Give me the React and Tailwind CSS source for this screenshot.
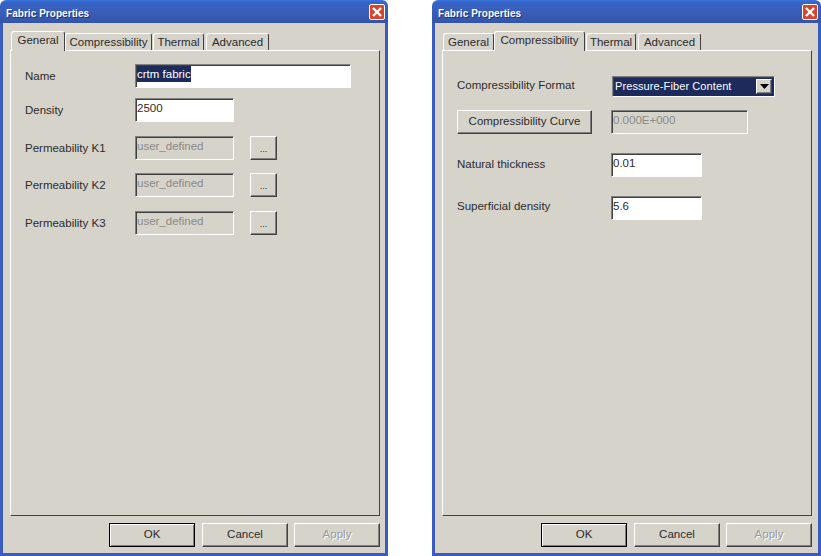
const face = "bg-[#d6d3cb]";
const raised =
  "border border-t-white border-l-white border-r-[#404040] border-b-[#404040] shadow-[inset_-1px_-1px_0_#808080]";
const sunken =
  "border border-t-[#808080] border-l-[#808080] border-r-white border-b-white shadow-[inset_1px_1px_0_#404040]";

function Tabs({ items }) {
  return (
    <div className="flex items-end h-[19px] pl-px">
      {items.map((t) => (
        <div
          key={t.label}
          className={`${t.width} ${t.gap} ${face} relative flex justify-center pt-px leading-[15px] border-l border-t border-r border-l-white border-t-white border-r-[#404040] rounded-t-[3px] ${
            t.active ? "h-[20px] z-10 -mb-px" : "h-[17px]"
          }`}
        >
          {t.label}
        </div>
      ))}
    </div>
  );
}

function Field({ value, width, disabled, selected }) {
  return (
    <div
      className={`${width} h-6 ${sunken} pl-px pt-[1px] leading-[16px] ${
        disabled ? "text-[#8a8a86]" : "bg-white"
      }`}
    >
      {selected ? (
        <span className="bg-[#1c2a5c] text-white inline-block h-[16px]">{value}</span>
      ) : (
        value
      )}
    </div>
  );
}

function Button({ children, width, disabled, isDefault }) {
  return (
    <div
      className={`${width} h-6 flex items-center justify-center ${
        isDefault
          ? "border border-black shadow-[inset_1px_1px_0_white,inset_-1px_-1px_0_#808080]"
          : raised
      } ${disabled ? "text-[#9a9a96] [text-shadow:1px_1px_0_white]" : ""}`}
    >
      {children}
    </div>
  );
}

function Window({ tabs, width, bodyPad, children }) {
  return (
    <div className={`${width} h-[556px] flex flex-col`}>
      <div className="h-[23px] shrink-0 rounded-t-[6px] bg-[linear-gradient(to_bottom,#3a74dc_0px,#3562c6_3px,#3a5eb8_12px,#3454a8_100%)] flex items-center justify-between pl-[6px] pr-[3px]">
        <span className="text-white font-bold text-[10px] tracking-[0.05px] pt-[3px] [text-shadow:1px_1px_0_#1c2f7a]">
          Fabric Properties
        </span>
        <div className="w-4 h-4 rounded-[2px] border border-white bg-[#d8452c] flex items-center justify-center">
          <svg width="12" height="12" viewBox="0 0 12 12">
            <path d="M2 2 L10 10 M10 2 L2 10" stroke="white" strokeWidth="2.4" />
          </svg>
        </div>
      </div>
      <div className={`flex-1 flex flex-col ${face} border-x-[3px] border-b-[3px] border-[#3a5cc0] pl-[7px] ${bodyPad} pt-2 pb-[6px]`}>
        <Tabs items={tabs} />
        <div className={`flex-1 ${face} border border-t-white border-l-white border-r-[#404040] border-b-[#404040] pl-[14px]`}>
          {children}
        </div>
        <div className="flex justify-end mt-[7px]">
          <Button width="w-[86px]" isDefault>OK</Button>
          <div className="ml-[7px]">
            <Button width="w-[86px]">Cancel</Button>
          </div>
          <div className="ml-[6px]">
            <Button width="w-[86px]" disabled>Apply</Button>
          </div>
        </div>
      </div>
    </div>
  );
}

const generalTabs = [
  { label: "General", width: "w-[54px]", gap: "", active: true },
  { label: "Compressibility", width: "w-[87px]", gap: "" },
  { label: "Thermal", width: "w-[51px]", gap: "ml-px" },
  { label: "Advanced", width: "w-[63px]", gap: "ml-[2px]" },
];

const compressTabs = [
  { label: "General", width: "w-[51px]", gap: "" },
  { label: "Compressibility", width: "w-[91px]", gap: "", active: true },
  { label: "Thermal", width: "w-[50px]", gap: "ml-px" },
  { label: "Advanced", width: "w-[63px]", gap: "ml-[2px]" },
];

function PermRow({ label, mt }) {
  return (
    <div className={`flex items-center ${mt}`}>
      <span className="w-[110px] pt-[2px]">{label}</span>
      <Field value="user_defined" width="w-[99px]" disabled />
      <div className="ml-4">
        <Button width="w-[27px]">
          <span className="text-[9px] pt-[3px]">...</span>
        </Button>
      </div>
    </div>
  );
}

export default function App() {
  return (
    <div className="w-[821px] h-[556px] bg-white flex overflow-hidden text-[11.5px] text-[#2c2c2c] font-['Liberation_Sans',Arial,sans-serif]">
      <Window tabs={generalTabs} width="w-[388px]" bodyPad="pr-[5px]">
        <div className="flex items-center mt-[13px]">
          <span className="w-[110px] pt-[2px]">Name</span>
          <Field value="crtm fabric" width="w-[216px]" selected />
        </div>
        <div className="flex items-center mt-[10px]">
          <span className="w-[110px] pt-[2px]">Density</span>
          <Field value="2500" width="w-[99px]" />
        </div>
        <PermRow label="Permeability K1" mt="mt-[14px]" />
        <PermRow label="Permeability K2" mt="mt-[13px]" />
        <PermRow label="Permeability K3" mt="mt-[14px]" />
      </Window>

      <div className="ml-[44px]">
        <Window tabs={compressTabs} width="w-[389px]" bodyPad="pr-[6px]">
          <div className="flex items-center mt-[25px]">
            <span className="w-[155px] pb-px">Compressibility Format</span>
            <div className={`w-[163px] h-[21px] ${sunken} flex bg-[#1c2a5c] p-[2px]`}>
              <span className="flex-1 text-white text-[11px] tracking-[0.1px] leading-[15px]">Pressure-Fiber Content</span>
              <div className={`w-4 ${face} ${raised} flex items-center justify-center`}>
                <svg width="9" height="5" viewBox="0 0 9 5">
                  <path d="M0 0 H9 L4.5 5 Z" fill="black" />
                </svg>
              </div>
            </div>
          </div>
          <div className="flex items-center mt-[13px]">
            <Button width="w-[135px]">Compressibility Curve</Button>
            <div className="ml-[19px]">
              <Field value="0.000E+000" width="w-[137px]" disabled />
            </div>
          </div>
          <div className="flex items-center mt-[19px]">
            <span className="w-[154px]">Natural thickness</span>
            <Field value="0.01" width="w-[91px]" />
          </div>
          <div className="flex items-center mt-[19px]">
            <span className="w-[154px] pb-[2px]">Superficial density</span>
            <Field value="5.6" width="w-[91px]" />
          </div>
        </Window>
      </div>
    </div>
  );
}
